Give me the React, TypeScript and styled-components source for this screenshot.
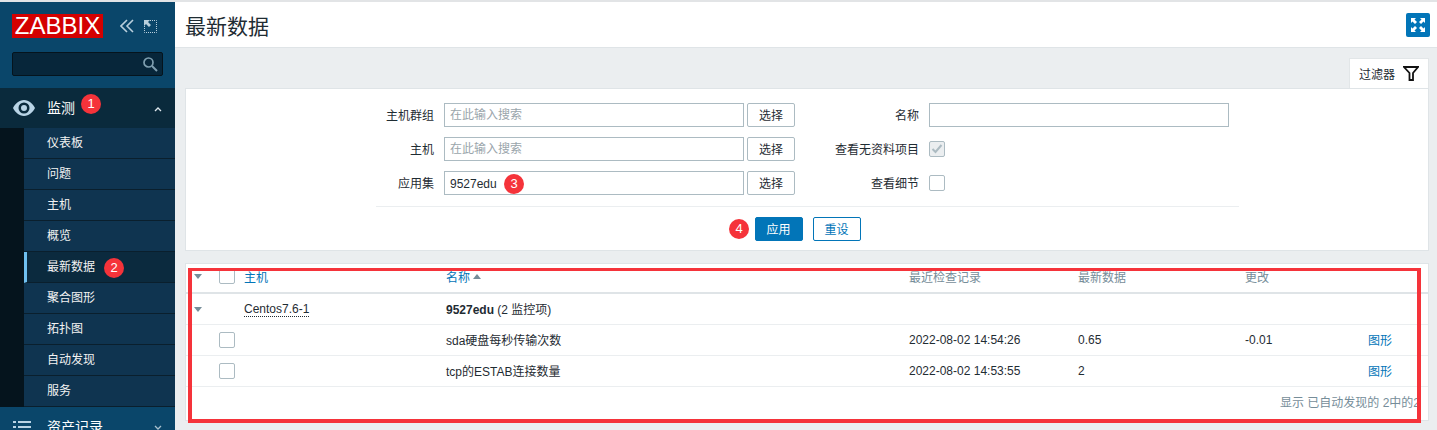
import styled, { createGlobalStyle } from "styled-components";

const GlobalStyle = createGlobalStyle`
  html, body {
    margin: 0;
    padding: 0;
    background: #ebeef0;
  }
  * {
    box-sizing: border-box;
  }
  body {
    font-family: "Liberation Sans", "Noto Sans CJK SC", sans-serif;
    font-size: 12px;
    color: #1f2c33;
  }
`;

const Page = styled.div`
  display: flex;
  width: 1437px;
  height: 430px;
  overflow: hidden;
  border-top: 2px solid #e2e4e6;
`;

/* sidebar */
const Sidebar = styled.aside`
  flex: 0 0 175px;
  display: flex;
  flex-direction: column;
  background: #0a466a;

  & > * {
    flex-shrink: 0;
  }
`;

const Brand = styled.div`
  display: flex;
  align-items: center;
  padding: 12px 0 0 12px;
  height: 36px;
`;

const Logo = styled.div`
  width: 91px;
  height: 24px;
  background: #d40000;
  color: #fff;
  font-size: 24px;
  line-height: 24px;
  text-align: center;
`;

const BrandIcons = styled.div`
  display: flex;
  align-items: center;
  gap: 10px;
  margin-left: 17px;
  color: #b9cfdc;
`;

const SearchBox = styled.div`
  display: flex;
  align-items: center;
  justify-content: flex-end;
  margin: 14px 12px 12px;
  height: 24px;
  padding-right: 4px;
  background: #07263a;
  border: 1px solid #05141d;
  border-radius: 2px;
  color: #7f9fb0;
`;

const NavHead = styled.div<{ $open?: boolean }>`
  position: relative;
  display: flex;
  align-items: center;
  height: 40px;
  padding-left: 13px;
  background: ${(p) => (p.$open ? "#0a2a3c" : "#0a466a")};
  color: #fff;
  font-size: 14px;
`;

const NavTitle = styled.span<{ $gap: number }>`
  margin-left: ${(p) => p.$gap}px;
  padding-bottom: 3px;
`;

const ChevronSlot = styled.span`
  position: absolute;
  right: 13px;
  top: 18px;
  line-height: 0;
`;

const SubNav = styled.div`
  display: flex;
  flex-direction: column;
  padding-left: 24px;
  background: #05141d;
`;

const NavItem = styled.div<{ $active?: boolean }>`
  position: relative;
  height: 31px;
  line-height: 31px;
  padding-left: ${(p) => (p.$active ? "20px" : "23px")};
  border-left: ${(p) => (p.$active ? "3px solid #6fc0f0" : "none")};
  border-bottom: 1px solid #0a1f2d;
  background: ${(p) => (p.$active ? "#0b2a3e" : "#0f3450")};
  color: #f2f2f2;
`;

const Badge = styled.span<{ $x: number; $y: number }>`
  position: absolute;
  left: ${(p) => p.$x}px;
  top: ${(p) => p.$y}px;
  width: 20px;
  height: 20px;
  border-radius: 50%;
  background: #f5333a;
  color: #fff;
  font-size: 13px;
  line-height: 20px;
  text-align: center;
  z-index: 2;
`;

/* main */
const Main = styled.main`
  flex: 1;
  display: flex;
  flex-direction: column;
  min-width: 0;
`;

const Header = styled.header`
  display: flex;
  align-items: center;
  justify-content: space-between;
  flex: 0 0 46px;
  padding: 0 7px 0 10px;
  background: #fff;
  border-bottom: 1px solid #dfe4e7;
`;

const Title = styled.h1`
  margin: 0;
  font-size: 21px;
  font-weight: 400;
  color: #1f2c33;
`;

const FullscreenButton = styled.button`
  display: flex;
  align-items: center;
  justify-content: center;
  width: 24px;
  height: 24px;
  padding: 0;
  border: none;
  border-radius: 2px;
  background: #0275b8;
  color: #fff;
`;

const Content = styled.div`
  display: flex;
  flex-direction: column;
  padding: 10px 8px 0 10px;
`;

const TabBar = styled.div`
  display: flex;
  justify-content: flex-end;
  margin-bottom: -1px;
  position: relative;
`;

const FilterTab = styled.div`
  display: flex;
  align-items: center;
  justify-content: space-between;
  width: 80px;
  height: 31px;
  padding: 0 9px;
  background: #fff;
  border: 1px solid #e2e6e8;
  border-bottom-color: #fff;
`;

const FilterPanel = styled.section`
  position: relative;
  height: 163px;
  padding-top: 14px;
  background: #fff;
  border: 1px solid #dfe4e7;
`;

const FormColumns = styled.div`
  display: flex;
`;

const FormColumn = styled.div<{ $label: number; $width: number }>`
  display: grid;
  grid-template-columns: ${(p) => p.$label}px 1fr;
  grid-auto-rows: 24px;
  row-gap: 10px;
  column-gap: 10px;
  width: ${(p) => p.$width}px;
  align-items: center;
`;

const Label = styled.label`
  text-align: right;
  padding-bottom: 2px;
`;

const Field = styled.div`
  position: relative;
  display: flex;
  align-items: center;
  gap: 3px;
`;

const TextBox = styled.div<{ $placeholder?: boolean }>`
  width: 300px;
  height: 24px;
  padding: 0 5px;
  line-height: ${(p) => (p.$placeholder ? "22px" : "24px")};
  border: 1px solid #acbbc2;
  color: ${(p) => (p.$placeholder ? "#9aa5ab" : "#1f2c33")};
`;

const PickButton = styled.button`
  width: 48px;
  height: 24px;
  padding: 0 0 2px;
  border: 1px solid #acbbc2;
  border-radius: 2px;
  background: #fff;
  font: inherit;
  color: #1f2c33;
`;

const CheckBox = styled.div<{ $disabled?: boolean }>`
  display: flex;
  align-items: center;
  justify-content: center;
  width: 16px;
  height: 16px;
  border: 1px solid #acbbc2;
  border-radius: 2px;
  background: ${(p) => (p.$disabled ? "#ebeef0" : "#fff")};
  color: #acbbc2;
`;

const Divider = styled.hr`
  margin: 11px 189px 0 190px;
  border: none;
  border-top: 1px solid #ebeef0;
`;

const FormActions = styled.div`
  display: flex;
  justify-content: center;
  gap: 10px;
  margin-top: 10px;
  padding-left: 1px;
`;

const ActionButton = styled.button<{ $primary?: boolean }>`
  width: 48px;
  height: 24px;
  padding: 0 0 2px;
  border: 1px solid #0275b8;
  border-radius: 2px;
  background: ${(p) => (p.$primary ? "#0275b8" : "#fff")};
  color: ${(p) => (p.$primary ? "#fff" : "#0275b8")};
  font: inherit;
`;

const TablePanel = styled.section`
  position: relative;
  margin-top: 12px;
  height: 158px;
  background: #fff;
  border: 1px solid #dfe4e7;
`;

const COLUMNS = "33px 25px 202px 463px 169px 167px 123px 1fr";

const Row = styled.div<{ $head?: boolean }>`
  display: grid;
  grid-template-columns: ${COLUMNS};
  align-items: center;
  height: ${(p) => (p.$head ? "30px" : "31px")};
  padding-bottom: ${(p) => (p.$head ? "4px" : "0")};
  border-bottom: ${(p) => (p.$head ? "2px solid #dfe4e7" : "1px solid #ebeef0")};
`;

const Toggle = styled.span`
  justify-self: start;
  margin-left: 8px;
  width: 0;
  height: 0;
  border-left: 4px solid transparent;
  border-right: 4px solid transparent;
  border-top: 5px solid #768d99;
`;

const HeadCell = styled.span<{ $link?: boolean }>`
  display: flex;
  align-items: center;
  gap: 3px;
  color: ${(p) => (p.$link ? "#0275b8" : "#768d99")};
`;

const SortArrow = styled.i`
  width: 0;
  height: 0;
  border-left: 4px solid transparent;
  border-right: 4px solid transparent;
  border-bottom: 5px solid #768d99;
`;

const HostName = styled.span`
  justify-self: start;
  border-bottom: 1px dotted #1f2c33;
  line-height: 14px;
`;

const NameCell = styled.span`
  padding-bottom: 2px;
`;

const GraphLink = styled.a`
  display: block;
  padding-bottom: 2px;
  color: #0275b8;
`;

const TableFooter = styled.div`
  padding: 6px 8px 0 0;
  text-align: right;
  color: #768d99;
  white-space: nowrap;
`;

const Highlight = styled.div`
  position: absolute;
  left: 2px;
  top: 4px;
  width: 1233px;
  height: 155px;
  border: 4px solid #f5333a;
  border-top-width: 3px;
  pointer-events: none;
`;

const subItems = ["仪表板", "问题", "主机", "概览", "最新数据", "聚合图形", "拓扑图", "自动发现", "服务"];

function Chevron({ up }: { up?: boolean }) {
  return (
    <ChevronSlot>
      <svg width="8" height="6" viewBox="0 0 8 6" fill="none" stroke={up ? "#dfe8ee" : "#a9c0ce"} strokeWidth="1.3">
        <path d={up ? "M1 5l3-3 3 3" : "M1 1l3 3 3-3"} />
      </svg>
    </ChevronSlot>
  );
}

export default function App() {
  return (
    <Page>
      <GlobalStyle />
      <Sidebar>
        <Brand>
          <Logo>ZABBIX</Logo>
          <BrandIcons>
            <svg width="14" height="14" viewBox="0 0 14 14" fill="none" stroke="currentColor" strokeWidth="1.6">
              <path d="M7 1L1 7l6 6M13 1L7 7l6 6" />
            </svg>
            <svg width="13" height="13" viewBox="0 0 13 13" fill="none">
              <path d="M6 .5h6.500V12.500H.5V6" stroke="currentColor" strokeDasharray="1 1" />
              <path d="M0 0h6L4 2l3 3-2 2-3-3-2 2z" fill="currentColor" />
            </svg>
          </BrandIcons>
        </Brand>
        <SearchBox>
          <svg width="16" height="16" viewBox="0 0 16 16" fill="none" stroke="currentColor" strokeWidth="1.7">
            <circle cx="6.500" cy="6.500" r="4.500" />
            <path d="M10 10l5 5" strokeWidth="2" />
          </svg>
        </SearchBox>
        <NavHead $open>
          <svg width="22" height="16" viewBox="0 0 22 16">
            <path
              fillRule="evenodd"
              fill="#b9d4e6"
              d="M11 0c5 0 9 4 11 8-2 4-6 8-11 8S2 12 0 8c2-4 6-8 11-8zm0 2.500a5.500 5.500 0 1 0 0 11 5.500 5.500 0 0 0 0-11zm0 2.500a3 3 0 1 1 0 6 3 3 0 0 1 0-6z"
            />
          </svg>
          <NavTitle $gap={12}>监测</NavTitle>
          <Badge $x={81} $y={6}>1</Badge>
          <Chevron up />
        </NavHead>
        <SubNav>
          {subItems.map((item) => (
            <NavItem key={item} $active={item === "最新数据"}>
              {item}
              {item === "最新数据" && <Badge $x={77} $y={6}>2</Badge>}
            </NavItem>
          ))}
        </SubNav>
        <NavHead>
          <svg width="18" height="14" viewBox="0 0 18 14" fill="#b9d4e6">
            <path d="M0 1h3v2H0zM5 1h13v2H5zM0 6h3v2H0zM5 6h13v2H5zM0 11h3v2H0zM5 11h13v2H5z" />
          </svg>
          <NavTitle $gap={16}>资产记录</NavTitle>
          <Chevron />
        </NavHead>
      </Sidebar>

      <Main>
        <Header>
          <Title>最新数据</Title>
          <FullscreenButton aria-label="全屏">
            <svg width="16" height="16" viewBox="0 0 16 16" fill="currentColor">
              <path d="M1 1h5L4.500 2.500 7 5 5 7 2.500 4.500 1 6zM15 1v5l-1.500-1.500L11 7 9 5l2.500-2.500L10 1zM1 15v-5l1.500 1.500L5 9l2 2-2.500 2.500L6 15zM15 15h-5l1.500-1.500L9 11l2-2 2.500 2.500L15 10z" />
            </svg>
          </FullscreenButton>
        </Header>

        <Content>
          <TabBar>
            <FilterTab>
              过滤器
              <svg width="16" height="15" viewBox="0 0 16 15" fill="none" stroke="#111" strokeWidth="1.800">
                <path d="M1 1h14l-5 6v7H6.500V7z" />
              </svg>
            </FilterTab>
          </TabBar>

          <FilterPanel>
            <FormColumns>
              <FormColumn $label={248} $width={609}>
                <Label>主机群组</Label>
                <Field>
                  <TextBox $placeholder>在此输入搜索</TextBox>
                  <PickButton>选择</PickButton>
                </Field>
                <Label>主机</Label>
                <Field>
                  <TextBox $placeholder>在此输入搜索</TextBox>
                  <PickButton>选择</PickButton>
                </Field>
                <Label>应用集</Label>
                <Field>
                  <TextBox>9527edu</TextBox>
                  <Badge $x={60} $y={3}>3</Badge>
                  <PickButton>选择</PickButton>
                </Field>
              </FormColumn>
              <FormColumn $label={124} $width={434}>
                <Label>名称</Label>
                <Field>
                  <TextBox />
                </Field>
                <Label>查看无资料项目</Label>
                <Field>
                  <CheckBox $disabled>
                    <svg width="12" height="10" viewBox="0 0 12 10" fill="none" stroke="currentColor" strokeWidth="2">
                      <path d="M1.500 5l3 3 6-7" />
                    </svg>
                  </CheckBox>
                </Field>
                <Label>查看细节</Label>
                <Field>
                  <CheckBox />
                </Field>
              </FormColumn>
            </FormColumns>
            <Divider />
            <FormActions>
              <Badge $x={543} $y={130}>4</Badge>
              <ActionButton $primary>应用</ActionButton>
              <ActionButton>重设</ActionButton>
            </FormActions>
          </FilterPanel>

          <TablePanel>
            <Row $head>
              <Toggle />
              <CheckBox />
              <HeadCell $link>主机</HeadCell>
              <HeadCell $link>
                名称
                <SortArrow />
              </HeadCell>
              <HeadCell>最近检查记录</HeadCell>
              <HeadCell>最新数据</HeadCell>
              <HeadCell>更改</HeadCell>
            </Row>
            <Row>
              <Toggle />
              <span />
              <HostName>Centos7.6-1</HostName>
              <NameCell>
                <b>9527edu</b> (2 监控项)
              </NameCell>
            </Row>
            <Row>
              <span />
              <CheckBox />
              <span />
              <NameCell>sda硬盘每秒传输次数</NameCell>
              <span>2022-08-02 14:54:26</span>
              <span>0.65</span>
              <span>-0.01</span>
              <GraphLink>图形</GraphLink>
            </Row>
            <Row>
              <span />
              <CheckBox />
              <span />
              <NameCell>tcp的ESTAB连接数量</NameCell>
              <span>2022-08-02 14:53:55</span>
              <span>2</span>
              <span />
              <GraphLink>图形</GraphLink>
            </Row>
            <TableFooter>显示 已自动发现的 2中的2</TableFooter>
            <Highlight />
          </TablePanel>
        </Content>
      </Main>
    </Page>
  );
}
